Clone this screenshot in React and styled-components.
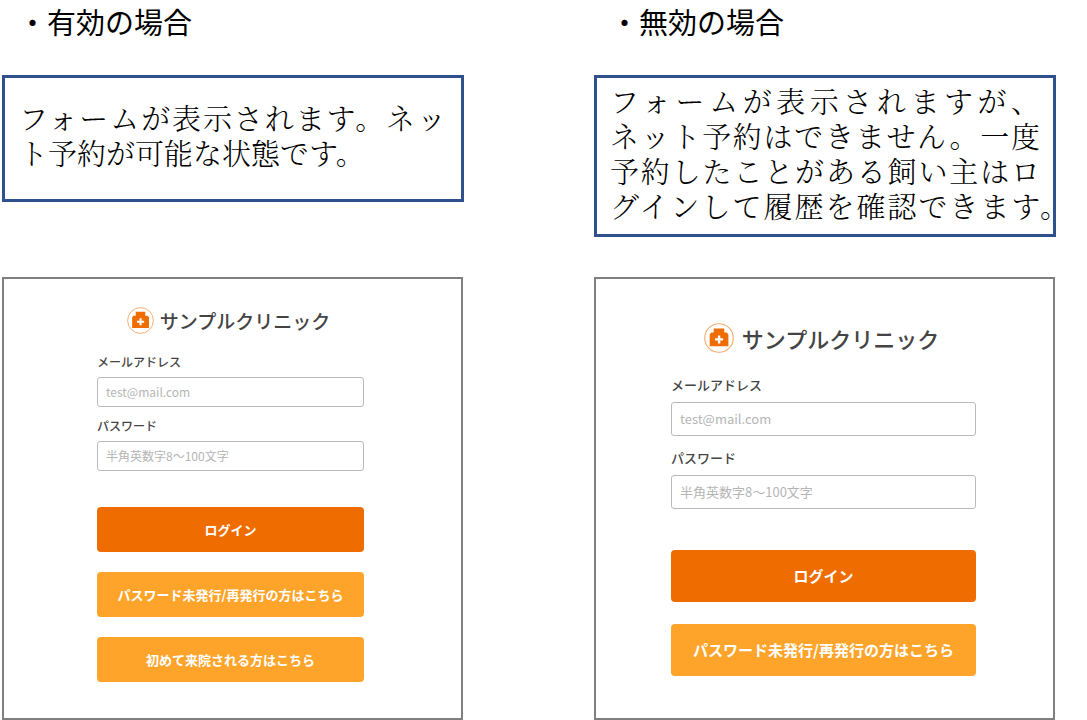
import React from "react";
import styled, { createGlobalStyle, ThemeProvider } from "styled-components";

const GlobalStyle = createGlobalStyle`
  *, *::before, *::after { box-sizing: border-box; }
  body {
    margin: 0;
    background: #fff;
    color: #000;
    font-family: "Noto Sans CJK JP", "Noto Sans", sans-serif;
  }
`;

const roomy = {
  cardPadding: "44px 77px 40px 75px",
  icon: 30, brandSize: 22, brandGap: 8, brandSpace: 23,
  labelSize: 13, labelGap: 8, fieldSize: 13, fieldHeight: 34, fieldSpace: 13,
  actionsSpace: 41, buttonHeight: 52, buttonSize: 15, buttonGap: 22,
};

const compact = {
  cardPadding: "28px 97px 36px 93px",
  icon: 27, brandSize: 19, brandGap: 6, brandSpace: 19,
  labelSize: 12, labelGap: 6, fieldSize: 12, fieldHeight: 30, fieldSpace: 10,
  actionsSpace: 36, buttonHeight: 45, buttonSize: 13, buttonGap: 20,
};

const Page = styled.main`
  display: grid;
  grid-template-columns: 1fr 1fr;
  grid-template-rows: auto auto auto;
  column-gap: 130px;
  padding: 0 31px 0 2px;
`;

const Case = styled.section`
  display: grid;
  grid-row: span 3;
  grid-template-rows: subgrid;
`;

const CaseTitle = styled.h2`
  margin: 0;
  padding: 0 0 33px 16px;
  font-size: 29px;
  line-height: 42px;
  font-weight: 400;
`;

const Note = styled.p`
  align-self: start;
  margin: 0 0 40px;
  padding: ${(p) => (p.$tall ? "5px 13px 11px 13px" : "22px 15px 29px 14px")};
  border: 3px solid #2f528f;
  font-family: "Noto Serif CJK JP", "Noto Sans CJK JP", serif;
  font-size: 29px;
  line-height: 35px;
  font-weight: 300;
`;

const Line = styled.span`
  display: block;
  white-space: nowrap;
  text-align: justify;
  text-align-last: ${(p) => (p.$last ? "left" : "justify")};
  margin-right: ${(p) => (p.$hang ? "-1em" : "0")};
`;

const Card = styled.form`
  display: flex;
  flex-direction: column;
  margin-right: 1px;
  padding: ${(p) => p.theme.cardPadding};
  border: 2px solid #7f7f7f;
  background: #fff;
  color: #444;
`;

const Brand = styled.h1`
  display: flex;
  align-items: center;
  justify-content: center;
  gap: ${(p) => p.theme.brandGap}px;
  height: ${(p) => p.theme.icon}px;
  margin: 0 0 ${(p) => p.theme.brandSpace}px;
  padding-right: 4px;
  font-size: ${(p) => p.theme.brandSize}px;
  font-weight: 500;
  white-space: nowrap;
`;

const Mark = styled.svg`
  flex: none;
  width: ${(p) => p.theme.icon}px;
  height: ${(p) => p.theme.icon}px;
`;

const Fields = styled.div`
  display: flex;
  flex-direction: column;
  gap: ${(p) => p.theme.fieldSpace}px;
`;

const Field = styled.div`
  display: flex;
  flex-direction: column;
  gap: ${(p) => p.theme.labelGap}px;
`;

const Label = styled.label`
  font-size: ${(p) => p.theme.labelSize}px;
  line-height: 18px;
  font-weight: 500;
`;

const Input = styled.input`
  width: 100%;
  height: ${(p) => p.theme.fieldHeight}px;
  padding: 0 8px 2px;
  border: 1px solid #b9b9b9;
  border-radius: 3px;
  background: #fff;
  color: #444;
  font-family: inherit;
  font-size: ${(p) => p.theme.fieldSize}px;
  &::placeholder { color: #b5b5b5; opacity: 1; }
`;

const Actions = styled.div`
  display: flex;
  flex-direction: column;
  gap: ${(p) => p.theme.buttonGap}px;
  margin-top: ${(p) => p.theme.actionsSpace}px;
`;

const Button = styled.button`
  height: ${(p) => p.theme.buttonHeight}px;
  padding: 0 0 1px;
  border: 0;
  border-radius: 4px;
  background: ${(p) => (p.$primary ? "#ef6c00" : "#ffa42b")};
  color: #fff;
  font-family: inherit;
  font-size: ${(p) => p.theme.buttonSize}px;
  font-weight: 700;
  white-space: nowrap;
  cursor: pointer;
`;

function ClinicMark() {
  return (
    <Mark viewBox="0 0 30 30" aria-hidden="true">
      <circle cx="15" cy="15" r="14.3" fill="#fff" stroke="#f6ab70" strokeWidth="1.1" />
      <path d="M9.7 5.4H20.3V9.6H22.8L24.4 11.4V23.2H5.7V11.4L7.3 9.6H9.7Z" fill="#ef6c00" />
      <path d="M15.1 12.4V20.4M11.1 16.4H19.1" stroke="#fff" strokeWidth="2.4" />
    </Mark>
  );
}

function LoginCard({ id, links }) {
  return (
    <Card onSubmit={(e) => e.preventDefault()}>
      <Brand><ClinicMark />サンプルクリニック</Brand>
      <Fields>
        <Field>
          <Label htmlFor={`${id}-mail`}>メールアドレス</Label>
          <Input id={`${id}-mail`} type="email" placeholder="test@mail.com" />
        </Field>
        <Field>
          <Label htmlFor={`${id}-password`}>パスワード</Label>
          <Input id={`${id}-password`} type="password" placeholder="半角英数字8〜100文字" />
        </Field>
      </Fields>
      <Actions>
        <Button type="submit" $primary>ログイン</Button>
        {links.map((text) => <Button key={text} type="button">{text}</Button>)}
      </Actions>
    </Card>
  );
}

export default function App() {
  return (
    <>
      <GlobalStyle />
      <Page lang="ja">
        <Case>
          <CaseTitle>・有効の場合</CaseTitle>
          <Note>
            <Line>フォームが表示されます。ネッ</Line>
            <Line $last>ト予約が可能な状態です。</Line>
          </Note>
          <ThemeProvider theme={compact}>
            <LoginCard
              id="enabled"
              links={["パスワード未発行/再発行の方はこちら", "初めて来院される方はこちら"]}
            />
          </ThemeProvider>
        </Case>
        <Case>
          <CaseTitle>・無効の場合</CaseTitle>
          <Note $tall>
            <Line>フォームが表示されますが、</Line>
            <Line>ネット予約はできません。一度</Line>
            <Line>予約したことがある飼い主はロ</Line>
            <Line $hang>グインして履歴を確認できます。</Line>
          </Note>
          <ThemeProvider theme={roomy}>
            <LoginCard id="disabled" links={["パスワード未発行/再発行の方はこちら"]} />
          </ThemeProvider>
        </Case>
      </Page>
    </>
  );
}
